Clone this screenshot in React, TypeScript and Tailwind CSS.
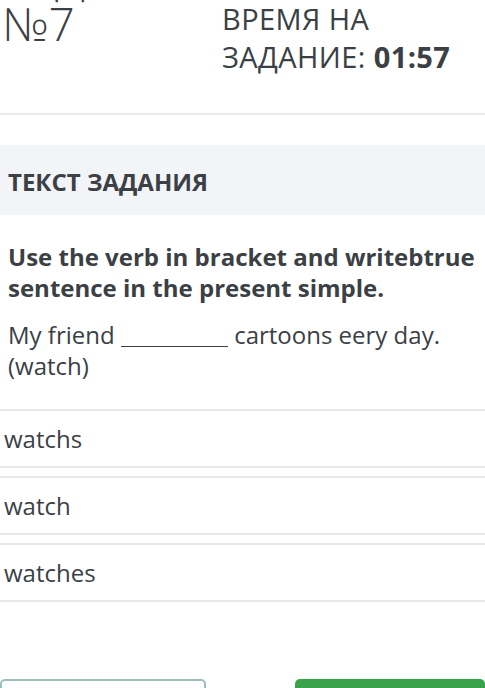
export default function App() {
  const options = ["watchs", "watch", "watches"];

  return (
    <div
      className="w-[485px] h-[688px] overflow-hidden bg-white text-[#3b4045]"
      style={{ fontFamily: '"Open Sans", "Liberation Sans", sans-serif' }}
    >
      {/* ---------- Header ---------- */}
      <div className="flex h-[115px] border-b-2 border-[#e8eaec]">
        <div className="w-[222px] pl-[2px] text-[46px] font-light">
          <div className="-mt-[47px] leading-[46px]">ЗАДАНИЕ</div>
          <div className="mt-[1px] leading-none">№7</div>
        </div>
        <div className="text-[29px] tracking-[0.4px] leading-[38px]">
          <div>ВРЕМЯ НА</div>
          <div>
            ЗАДАНИЕ: <span className="font-bold">01:57</span>
          </div>
        </div>
      </div>

      {/* ---------- Task title ---------- */}
      <div className="mt-[30px] h-[70px] bg-[#f3f4f7] flex items-center pl-[8px]">
        <span className="text-[24px] font-bold pt-[3px]">ТЕКСТ ЗАДАНИЯ</span>
      </div>

      {/* ---------- Question ---------- */}
      <div className="px-[8px] pt-[26px]">
        <p className="text-[24px] font-bold leading-[31px]">
          Use the verb in bracket and writebtrue sentence in the present simple.
        </p>
        <p className="mt-[16px] text-[24px] leading-[31px]">
          My friend{" "}
          <span className="inline-block w-[107px] mb-[-3px] border-b-[1.5px] border-[#3b4045]"></span>{" "}
          cartoons eery day. (watch)
        </p>
      </div>

      {/* ---------- Options ---------- */}
      <div className="mt-[28px] flex flex-col gap-[8px]">
        {options.map((o) => (
          <div
            key={o}
            className="h-[59px] border-y-2 border-[#e6e8ea] flex items-center pl-[4px] text-[24px]"
          >
            {o}
          </div>
        ))}
      </div>

      {/* ---------- Buttons ---------- */}
      <div className="mt-[77px] flex justify-between">
        <div className="w-[206px] h-[40px] border-2 border-[#9bbfbd] rounded-[5px] bg-white"></div>
        <div className="w-[190px] h-[40px] rounded-[5px] bg-[#38a34a]"></div>
      </div>
    </div>
  );
}
